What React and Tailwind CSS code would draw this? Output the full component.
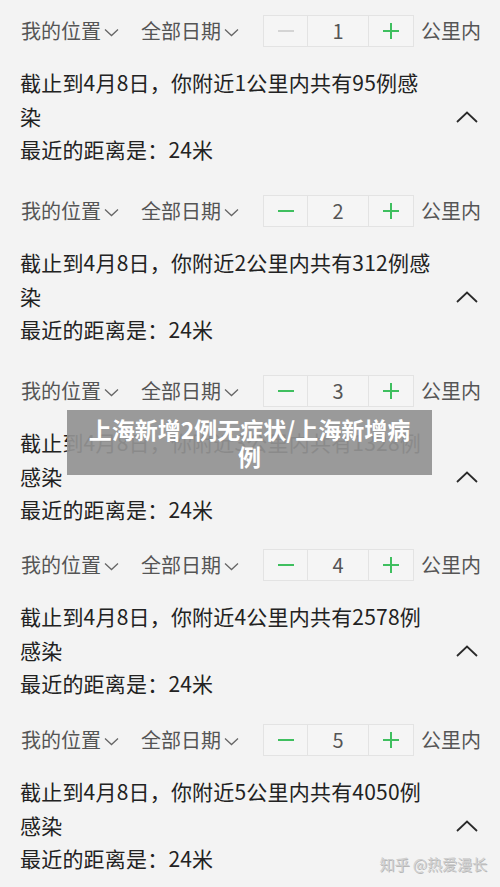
import React from "react"

const sections = [
  { km: "1", lines: ["截止到4月8日，你附近1公里内共有95例感", "染"], minusOn: false, h: "h-[180px]" },
  { km: "2", lines: ["截止到4月8日，你附近2公里内共有312例感", "染"], minusOn: true, h: "h-[180px]" },
  { km: "3", lines: ["截止到4月8日，你附近3公里内共有1328例", "感染"], minusOn: true, h: "h-[174px]" },
  { km: "4", lines: ["截止到4月8日，你附近4公里内共有2578例", "感染"], minusOn: true, h: "h-[175px]" },
  { km: "5", lines: ["截止到4月8日，你附近5公里内共有4050例", "感染"], minusOn: true, h: "h-[178px]" },
]

function ChevronDown() {
  return (
    <svg width="15" height="9" viewBox="0 0 15 9" className="ml-[3px] mt-[3px]">
      <path d="M1 1.5 L7.5 7.5 L14 1.5" fill="none" stroke="#666" strokeWidth="1.3" />
    </svg>
  )
}

function ChevronUp() {
  return (
    <svg width="22" height="12" viewBox="0 0 22 12">
      <path d="M1 11 L11 1.5 L21 11" fill="none" stroke="#2a2a2a" strokeWidth="1.8" />
    </svg>
  )
}

function Stepper({ value, minusOn }) {
  return (
    <div className="flex h-8 w-[151px] border border-[#e3e3e3] bg-[#f5f5f5]">
      <div className="flex w-[44px] items-center justify-center border-r border-[#e3e3e3]">
        <div className={minusOn ? "h-[2px] w-4 bg-[#3fbf5f]" : "h-[2px] w-4 bg-[#d4d4d4]"} />
      </div>
      <div className="flex flex-1 items-center justify-center border-r border-[#e3e3e3] text-[20px] text-[#555]">
        {value}
      </div>
      <div className="relative flex w-[44px] items-center justify-center">
        <div className="h-[2px] w-4 bg-[#3fbf5f]" />
        <div className="absolute h-4 w-[2px] bg-[#3fbf5f]" />
      </div>
    </div>
  )
}

function Section({ s }) {
  return (
    <div className={"pt-[15px] " + s.h}>
      <div className="flex h-8 items-center pl-[21px] text-[20px] text-[#555]">
        <div className="flex w-[120px] items-center">
          <span>我的位置</span>
          <ChevronDown />
        </div>
        <div className="flex w-[122px] items-center">
          <span>全部日期</span>
          <ChevronDown />
        </div>
        <Stepper value={s.km} minusOn={s.minusOn} />
        <span className="ml-[7px]">公里内</span>
      </div>
      <div className="mt-[19px] flex pl-[20px] pr-[22px]">
        <div className="flex-1 text-[21px] leading-[33.5px] tracking-[0.2px] text-[#222]">
          {s.lines.map((l, i) => (
            <div key={i}>{l}</div>
          ))}
          <div>最近的距离是：24米</div>
        </div>
        <div className="flex h-[67px] items-end pb-[10px]">
          <ChevronUp />
        </div>
      </div>
    </div>
  )
}

export default function App() {
  return (
    <div
      className="relative h-[887px] w-[500px] overflow-hidden bg-[#f3f3f3]"
      style={{ fontFamily: '"Noto Sans CJK SC", "Noto Sans", sans-serif' }}
    >
      {sections.map(s => (
        <Section key={s.km} s={s} />
      ))}

      <div className="absolute left-[67px] top-[410px] flex h-[65px] w-[365px] items-center justify-center bg-[#929292]/[0.93] px-[12px] text-center text-[23px] font-bold leading-[27px] text-white">
        上海新增2例无症状/上海新增病例
      </div>

      <div className="absolute right-[13px] top-[853px] text-[15px] text-[#d0d0d0] [text-shadow:1px_1px_0_#b8b8b8]">
        知乎 @热爱漫长
      </div>
    </div>
  )
}
